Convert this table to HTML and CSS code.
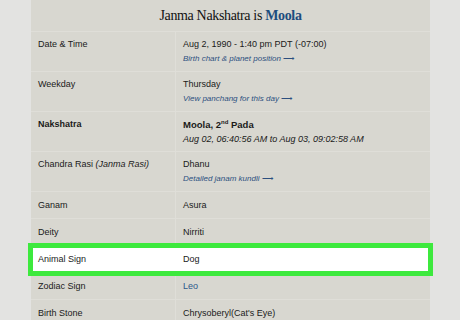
FILE: index.html
```html
<!DOCTYPE html>
<html>
<head>
<meta charset="utf-8">
<link rel="stylesheet" href="styles.css">
</head>
<body>
<div class="table">
  <div class="title">Janma Nakshatra is <span class="moola">Moola</span></div>
  <div class="row double">
    <div class="label">Date &amp; Time</div>
    <div class="value">Aug 2, 1990 - 1:40 pm PDT (-07:00)<div class="link">Birth chart &amp; planet position <span class="arrow">⟶</span></div></div>
  </div>
  <div class="row double">
    <div class="label">Weekday</div>
    <div class="value">Thursday<div class="link">View panchang for this day <span class="arrow">⟶</span></div></div>
  </div>
  <div class="row double">
    <div class="label bold">Nakshatra</div>
    <div class="value"><span class="bold big">Moola, 2<sup>nd</sup> Pada</span><div class="time">Aug 02, 06:40:56 AM to Aug 03, 09:02:58 AM</div></div>
  </div>
  <div class="row double">
    <div class="label">Chandra Rasi <i>(Janma Rasi)</i></div>
    <div class="value">Dhanu<div class="link">Detailed janam kundli <span class="arrow">⟶</span></div></div>
  </div>
  <div class="row">
    <div class="label">Ganam</div>
    <div class="value">Asura</div>
  </div>
  <div class="row">
    <div class="label">Deity</div>
    <div class="value">Nirriti</div>
  </div>
  <div class="row highlight">
    <div class="label">Animal Sign</div>
    <div class="value">Dog</div>
  </div>
  <div class="row">
    <div class="label">Zodiac Sign</div>
    <div class="value"><span class="plain-link">Leo</span></div>
  </div>
  <div class="row">
    <div class="label">Birth Stone</div>
    <div class="value">Chrysoberyl(Cat's Eye)</div>
  </div>
</div>
</body>
</html>
```
FILE: styles.css
```css
html, body {
  margin: 0;
  padding: 0;
  background: #e3e3e1;
  height: 320px;
  overflow: hidden;
}
.table {
  margin-left: 31px;
  width: 399px;
  background: #d8d7d0;
  font-family: "Liberation Sans", Arial, sans-serif;
  font-size: 9px;
  color: #1a1a1a;
}
.title {
  height: 31px;
  border-bottom: 1px solid #dfded8;
  font-family: "Liberation Serif", "Times New Roman", serif;
  font-size: 14px;
  line-height: 31px;
  text-align: center;
  color: #111;
  letter-spacing: -0.35px;
}
.moola {
  color: #1d4d7e;
  font-weight: bold;
}
.row {
  display: grid;
  grid-template-columns: 145px 1fr;
  border-bottom: 1px solid #dfded8;
  height: 26px;
}
.row.double {
  height: 39px;
}
.label, .value {
  padding: 7px 7px 0;
  line-height: 13px;
}
.row.double .label, .row.double .value {
  padding-top: 6px;
}
.label {
  border-right: 1px solid #dfded8;
}
.bold {
  font-weight: bold;
}
.big {
  font-size: 9.5px;
}
sup {
  font-size: 6px;
  line-height: 0;
  vertical-align: 4px;
}
.link {
  font-style: italic;
  font-size: 8px;
  color: #2c4f7f;
  line-height: 15px;
}
.arrow {
  font-style: normal;
  font-size: 8px;
}
.time {
  font-style: italic;
  line-height: 15px;
}
.plain-link {
  color: #2d5a8c;
}
.highlight {
  background: #ffffff;
  outline: 5px solid #3de93d;
  outline-offset: -2px;
}
.highlight .label {
  border-right-color: #ffffff;
}
```
